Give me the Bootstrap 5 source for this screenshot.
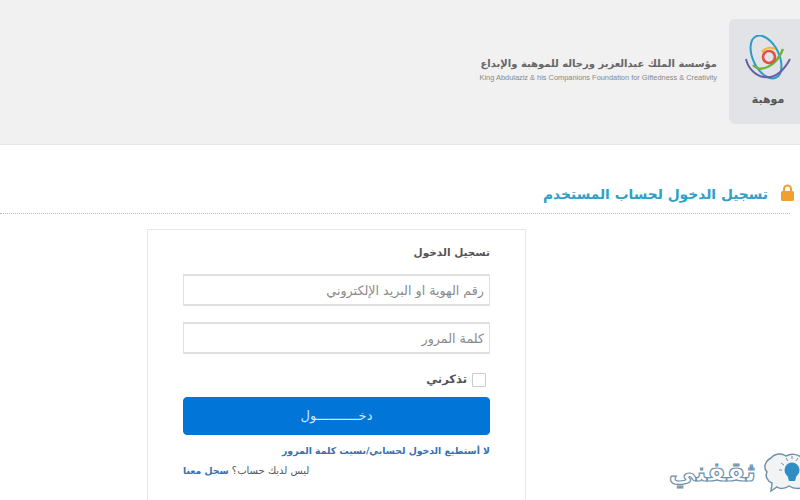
<!DOCTYPE html>
<html lang="ar" dir="rtl">
<head>
    <meta charset="UTF-8">
    <title>تسجيل الدخول</title>
    <link href="https://cdn.jsdelivr.net/npm/bootstrap@5.3.0/dist/css/bootstrap.min.css" rel="stylesheet">
    <style>
        html, body { height: 500px; overflow: hidden; }
        body { font-family: "DejaVu Sans", sans-serif; background: #fff; color: #555; position: relative; }
        .top-band { height: 145px; background: #f1f1f2; border-bottom: 1px solid #e6e6e6; padding-top: 19px; }
        .logo-tile { width: 71px; height: 105px; background: #e2e3e6; border-top-left-radius: 6px; border-bottom-left-radius: 6px; padding-left: 7px; }
        .logo-word { font-size: 11px; font-weight: 700; color: #555; line-height: 12px; margin-top: 5px; }
        .foundation { margin-right: 12px; margin-top: 38px; width: 238px; }
        .foundation-ar { font-size: 10px; font-weight: 700; color: #666; line-height: 14px; white-space: nowrap; }
        .foundation-en { font-family: "Liberation Sans", sans-serif; font-size: 7.4px; color: #888; line-height: 10px; white-space: nowrap; direction: ltr; text-align: right; margin-top: 2px; }
        .page-head { margin-top: 38px; height: 31px; margin-right: 10px; border-bottom: 1px dotted #bbb; gap: 13px; }
        .page-head svg { margin-top: 1px; margin-right: -4px; }
        .page-head h1 { font-size: 13.8px; font-weight: 700; color: #2f9fc9; margin: 0; line-height: 23px; }
        .login-box { width: 379px; height: 290px; margin: 15px 274px 0 0; background: #fff; border: 1px solid #e6e6e6; padding: 12px 35px 0 35px; }
        .login-box h2 { font-size: 10.5px; font-weight: 700; color: #555; margin: 0 0 12px; line-height: 20px; }
        .login-input { height: 32px; border: 1px solid #e0e0e0; border-width: 2px 1px; border-radius: 0; font-size: 12.7px; font-family: "DejaVu Sans", sans-serif; padding: 0 5px; margin-bottom: 16px; color: #555; }
        .login-input::placeholder { color: #8a8a8a; }
        .remember { height: 26px; margin-top: -3px; padding-right: 4px; gap: 5px; }
        .remember .form-check-input[type=checkbox] { width: 14px; height: 14px; border: 1px solid #ccc; border-radius: 1px; margin: 0; float: none; flex: none; }
        .remember label { font-size: 11.5px; font-weight: 700; color: #555; }
        .login-btn { height: 38px; width: 100%; background: #0275d8; border-color: #0275d8; border-radius: 4px; color: #cfe8fb; font-size: 13px; padding: 0; margin-top: 4px; }
        .help-link { font-size: 9.3px; font-weight: 700; color: #3a6fb0; text-decoration: none; white-space: nowrap; }
        .help-row { margin-top: 6px; line-height: 16px; }
        .signup-row { margin-top: 4px; font-size: 10px; line-height: 16px; color: #555; text-align: left; }
        .stamp { position: absolute; left: 672px; top: 450px; width: 128px; height: 50px; }
        .stamp-word { font-size: 27px; font-weight: 700; line-height: 44px; color: #fff; -webkit-text-stroke: 1.2px #6f93ad; white-space: nowrap; }
    </style>
</head>
<body>
    <header class="top-band d-flex">
        <div class="logo-tile d-flex flex-column align-items-center">
            <svg width="48" height="54" viewBox="0 0 48 54" fill="none" class="mt-3">
                <ellipse cx="22" cy="22" rx="13" ry="23" transform="rotate(-26 22 22)" stroke="#2e9cc4" stroke-width="2"/>
                <path d="M2 24 C6 42 30 54 46 24" stroke="#6a5fa8" stroke-width="2"/>
                <path d="M9 30 C16 38 32 32 39 14" stroke="#6cb33f" stroke-width="2.4"/>
                <circle cx="25" cy="22" r="6" stroke="#e5503f" stroke-width="2.6"/>
                <path d="M18 17 C21 12 27 12 31 14" stroke="#f2b632" stroke-width="2"/>
            </svg>
            <div class="logo-word">موهبة</div>
        </div>
        <div class="foundation">
            <div class="foundation-ar">مؤسسة الملك عبدالعزيز ورجاله للموهبة والإبداع</div>
            <div class="foundation-en">King Abdulaziz &amp; his Companions Foundation for Giftedness &amp; Creativity</div>
        </div>
    </header>

    <div class="page-head d-flex align-items-start">
        <svg width="13" height="17" viewBox="0 0 13 17">
            <path d="M3 8V5a3.5 3.5 0 0 1 7 0v3" fill="none" stroke="#f0a030" stroke-width="2"/>
            <rect x="0" y="7" width="13" height="10" rx="1.5" fill="#f0a030"/>
        </svg>
        <h1>تسجيل الدخول لحساب المستخدم</h1>
    </div>

    <form class="login-box">
        <h2>تسجيل الدخول</h2>
        <input type="text" class="form-control login-input" placeholder="رقم الهوية او البريد الإلكتروني">
        <input type="password" class="form-control login-input" placeholder="كلمة المرور">
        <div class="remember d-flex align-items-center">
            <input class="form-check-input" type="checkbox" id="rememberMe">
            <label for="rememberMe">تذكرني</label>
        </div>
        <button type="button" class="btn btn-primary login-btn">دخـــــــــــول</button>
        <div class="help-row"><a href="#" class="help-link">لا أستطيع الدخول لحسابي/نسيت كلمة المرور</a></div>
        <div class="signup-row">ليس لديك حساب؟ <a href="#" class="help-link">سجل معنا</a></div>
    </form>

    <div class="stamp d-flex align-items-start">
        <svg width="44" height="44" viewBox="0 0 44 44" class="flex-shrink-0">
            <path d="M15 8 C19 3 26 3 30 6 C35 3 42 4 46 8 L46 38 C40 39 36 38 33 36 C29 39 24 39 21 37 L15 41 L16 33 C11 31 9 26 11 22 C7 18 9 11 15 8Z" fill="#f1f3f4" stroke="#6f93ad" stroke-width="1.5"/>
            <circle cx="36" cy="20" r="7.5" fill="#2f8fc4"/>
            <path d="M31 24h10l-2 7h-6z" fill="#2f8fc4"/>
            <path d="M25 13l3 2M30 8l2 3M36 6v3M42 8l-2 3M23 20h3" stroke="#6f93ad" stroke-width="1"/>
        </svg>
        <div class="stamp-word">ثقفني</div>
    </div>

    <script src="https://cdn.jsdelivr.net/npm/bootstrap@5.3.0/dist/js/bootstrap.bundle.min.js"></script>
</body>
</html>
